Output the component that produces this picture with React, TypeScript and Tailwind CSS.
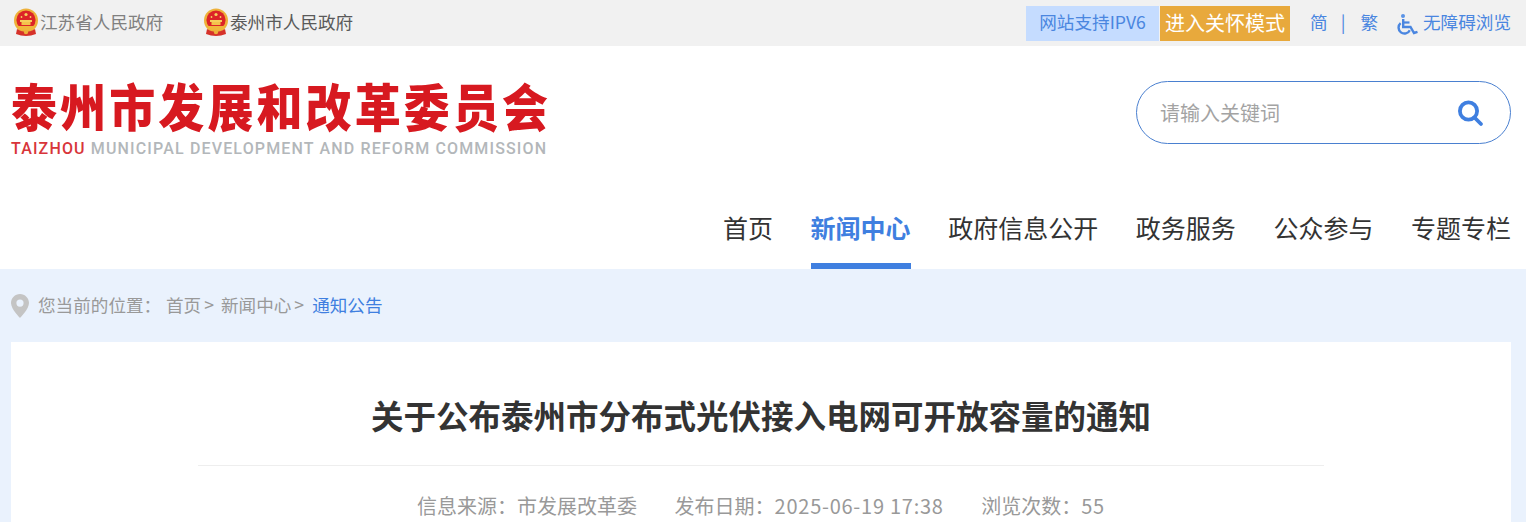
const cjk = "font-['Noto_Sans_CJK_SC','Microsoft_YaHei',sans-serif]";

function Emblem() {
  return (
    <svg width="26" height="30" viewBox="0 0 26 30" className="shrink-0">
      <circle cx="13" cy="12.5" r="12" fill="#eeb13a" />
      <circle cx="13" cy="12" r="9.6" fill="#dc2327" />
      <circle cx="13" cy="6.5" r="1.6" fill="#f6cf5c" />
      <circle cx="8.5" cy="9" r="0.9" fill="#f6cf5c" />
      <circle cx="17.5" cy="9" r="0.9" fill="#f6cf5c" />
      <rect x="7" y="12" width="12" height="2" fill="#f6cf5c" />
      <rect x="8.5" y="14" width="9" height="3" fill="#f3c24c" />
      <rect x="5" y="18" width="16" height="4" fill="#f0b63c" />
      <path d="M4 21 Q13 27 22 21 L23 26 Q13 30 3 26 Z" fill="#d6322a" />
      <circle cx="13" cy="24" r="2.2" fill="#eeb13a" />
    </svg>
  );
}

function Wheelchair() {
  return (
    <svg width="21" height="21" viewBox="0 0 21 21" fill="none" className="mt-[3px] shrink-0">
      <circle cx="6" cy="2" r="2" fill="#5a93e6" />
      <path d="M6.2 5 V13 H13.5 L17 19 L20.5 17.8" stroke="#4a86e0" strokeWidth="2.4" />
      <path d="M6.5 8.5 H12.5" stroke="#4a86e0" strokeWidth="2.2" />
      <path d="M3.6 9.2 A5.9 5.9 0 1 0 12.8 16.2" stroke="#4a86e0" strokeWidth="2.4" />
    </svg>
  );
}

function Pin() {
  return (
    <svg width="18" height="24" viewBox="0 0 18 24" className="shrink-0">
      <path fillRule="evenodd" d="M9 0 C4 0 0 4 0 9 C0 15 9 24 9 24 C9 24 18 15 18 9 C18 4 14 0 9 0 Z M9 5.5 A3.6 3.6 0 1 1 9 12.7 A3.6 3.6 0 1 1 9 5.5 Z" fill="#c4c4c4" />
    </svg>
  );
}

function SearchIcon() {
  return (
    <svg width="28" height="28" viewBox="0 0 28 28" fill="none">
      <circle cx="11.5" cy="12" r="8.6" stroke="#3f7fe0" strokeWidth="3.8" />
      <path d="M17.5 18.5 L24 25" stroke="#3f7fe0" strokeWidth="3.8" strokeLinecap="round" />
    </svg>
  );
}

const navItems = ["首页", "新闻中心", "政府信息公开", "政务服务", "公众参与", "专题专栏"];

export default function App() {
  return (
    <div className={`${cjk} h-[532px] w-full overflow-hidden bg-white`}>
      <div className="flex h-[46px] items-center justify-between bg-[#f1f1f1] pl-[13px] pr-[15px]">
        <div className="flex items-center text-[17.6px]">
          <div className="flex w-[190px] items-center gap-px text-[#808080]">
            <Emblem />
            <span className="pb-[2px]">江苏省人民政府</span>
          </div>
          <div className="flex items-center gap-px text-[#5a5a5a]">
            <Emblem />
            <span className="pb-[2px]">泰州市人民政府</span>
          </div>
        </div>
        <div className="flex h-[35px] items-center text-[17.6px] text-[#4a86e0]">
          <div className="flex h-[35px] w-[133px] items-center justify-center bg-[#c5dcff] pb-[1px]">网站支持IPV6</div>
          <div className="ml-px flex h-[35px] w-[130px] items-center justify-center bg-[#e8a93c] pb-[1px] text-[20px] text-white">进入关怀模式</div>
          <span className="ml-[20px] pb-[1px]">简</span>
          <span className="ml-[13px] pb-[1px]">|</span>
          <span className="ml-[15px] pb-[1px]">繁</span>
          <span className="ml-[19px] flex items-center gap-[5px]">
            <Wheelchair />
            <span className="pb-[1px]">无障碍浏览</span>
          </span>
        </div>
      </div>

      <div className="flex h-[144px] items-start justify-between pl-[11px] pr-[15px]">
        <div className="mt-[28px] w-[537px]">
          <div className="origin-top scale-y-110 whitespace-nowrap text-[46px] font-black leading-[56px] tracking-[3.1px] text-[#d71920]">泰州市发展和改革委员会</div>
          <div className="mt-[9px] whitespace-nowrap font-['Roboto',sans-serif] text-[16px] font-medium leading-[20px] tracking-[1.15px] text-[#b3b7ba]">
            <span className="text-[#d8353a]">TAIZHOU</span> MUNICIPAL DEVELOPMENT AND REFORM COMMISSION
          </div>
        </div>
        <div className="mt-[35px] flex h-[63px] w-[375px] items-center justify-between rounded-[32px] border border-[#4a80d0] pl-[23px] pr-[25px]">
          <span className="text-[20px] text-[#a3a3a3]">请输入关键词</span>
          <SearchIcon />
        </div>
      </div>

      <nav className="flex h-[79px] justify-end gap-[37.6px] pr-[15px] text-[25px] text-[#333333]">
        {navItems.map((item, i) => (
          <div
            key={item}
            className={
              i === 1
                ? "flex h-[79px] items-start border-b-[6px] border-[#3f7fe0] pt-[17px] font-bold leading-[40px] text-[#3f7fe0]"
                : "flex h-[79px] items-start pt-[17px] leading-[40px]"
            }
          >
            {item}
          </div>
        ))}
      </nav>

      <div className="bg-[#eaf2fd] px-[11px]">
        <div className="flex h-[73px] items-center text-[17.6px] text-[#999999]">
          <Pin />
          <span className="ml-[9px] w-[128px] whitespace-nowrap">您当前的位置：</span>
          <span>首页</span>
          <span className="ml-[3px]">&gt;</span>
          <span className="ml-[7px]">新闻中心</span>
          <span className="ml-[3px]">&gt;</span>
          <span className="ml-[8px] text-[#3f7fe0]">通知公告</span>
        </div>
        <div className="w-[1500px] bg-white px-[187px] pt-[48px]">
          <h1 className="text-center text-[32.5px] font-bold leading-[50px] text-[#333333]">关于公布泰州市分布式光伏接入电网可开放容量的通知</h1>
          <div className="mt-[25px] border-t border-[#eeeeee] pt-[24px]">
            <div className="flex justify-center gap-[37.5px] text-[20px] leading-[32px] text-[#999999]">
              <span>信息来源：市发展改革委</span>
              <span>发布日期：<span className="tracking-[0.75px]">2025-06-19 17:38</span></span>
              <span>浏览次数：<span className="tracking-[0.75px]">55</span></span>
            </div>
          </div>
        </div>
      </div>
    </div>
  );
}
